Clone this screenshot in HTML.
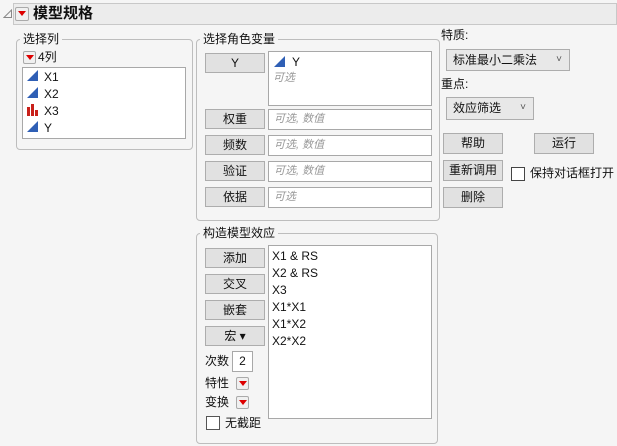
<!DOCTYPE html>
<html><head><meta charset="utf-8"><style>
*{box-sizing:border-box;margin:0;padding:0}
body{width:617px;height:446px;background:#f5f5f5;font-family:"Liberation Sans","Noto Sans CJK SC",sans-serif;font-size:12px;color:#111;position:relative;overflow:hidden}
.a{position:absolute}
.grp{position:absolute;border:1px solid #bdbdbd;border-radius:4px}
.leg{position:absolute;background:#f5f5f5;padding:0 3px;font-size:12px;line-height:14px}
.btn{position:absolute;background:#e1e1e1;border:1px solid #adadad;text-align:center;font-size:12px;line-height:18px}
.box{position:absolute;background:#fff;border:1px solid #a8a8a8}
.ph{color:#999;font-style:italic;font-size:11px;padding-left:5px;line-height:18px}
.rb{position:absolute;width:13px;height:13px;border:1px solid #aaa;background:#f0f0f0;border-radius:2px}
.rb:after{content:"";position:absolute;left:2px;top:3px;border-left:4px solid transparent;border-right:4px solid transparent;border-top:5px solid #d00}
.cb{position:absolute;width:14px;height:14px;border:1px solid #333;background:#fff}
.dd{position:absolute;background:#e8e8e8;border:1px solid #adadad;font-size:12px;line-height:20px;padding-left:6px}
.dd:after{content:"˅";position:absolute;right:7px;top:0;font-size:10px;color:#555}
.it{position:absolute;font-size:12px;line-height:14px}
</style></head><body>
<svg class="a" style="left:3px;top:9px" width="10" height="10"><polygon points="1,8.5 8.5,1 8.5,8.5" fill="none" stroke="#888" stroke-width="1"/></svg>
<div class="a" style="left:13px;top:3px;width:604px;height:22px;background:#ececec;border:1px solid #c8c8c8"></div>
<div class="rb" style="left:15px;top:7px;width:14px;height:14px"></div>
<div class="a" style="left:33px;top:4px;font-size:15px;font-weight:bold;line-height:20px">模型规格</div>

<div class="grp" style="left:16px;top:39px;width:177px;height:111px"></div>
<div class="leg" style="left:20px;top:32px">选择列</div>
<div class="rb" style="left:23px;top:51px"></div>
<div class="a" style="left:38px;top:50px;line-height:14px">4列</div>
<div class="box" style="left:22px;top:67px;width:164px;height:72px"></div>
<svg class="a" style="left:26px;top:69px" width="16" height="68">
<polygon points="1,12 12,1 12,12" fill="#2f5fb5"/><polygon points="1,29 12,18 12,29" fill="#2f5fb5"/>
<rect x="1" y="38" width="3" height="9" fill="#c8201a"/><rect x="5" y="35" width="3" height="12" fill="#c8201a"/><rect x="9" y="41" width="3" height="6" fill="#c8201a"/>
<polygon points="1,63 12,52 12,63" fill="#2f5fb5"/></svg>
<div class="it" style="left:44px;top:70px">X1</div>
<div class="it" style="left:44px;top:87px">X2</div>
<div class="it" style="left:44px;top:104px">X3</div>
<div class="it" style="left:44px;top:121px">Y</div>

<div class="grp" style="left:196px;top:39px;width:244px;height:182px"></div>
<div class="leg" style="left:200px;top:32px">选择角色变量</div>
<div class="btn" style="left:205px;top:53px;width:60px;height:20px">Y</div>
<div class="box" style="left:268px;top:51px;width:164px;height:55px"></div>
<svg class="a" style="left:273px;top:55px" width="14" height="13"><polygon points="1,12 12,1 12,12" fill="#2f5fb5"/></svg>
<div class="it" style="left:292px;top:55px">Y</div>
<div class="it" style="left:273px;top:71px;color:#999;font-style:italic;font-size:11px">可选</div>
<div class="btn" style="left:205px;top:109px;width:60px;height:20px">权重</div>
<div class="box ph" style="left:268px;top:109px;width:164px;height:21px">可选, 数值</div>
<div class="btn" style="left:205px;top:135px;width:60px;height:20px">频数</div>
<div class="box ph" style="left:268px;top:135px;width:164px;height:21px">可选, 数值</div>
<div class="btn" style="left:205px;top:161px;width:60px;height:20px">验证</div>
<div class="box ph" style="left:268px;top:161px;width:164px;height:21px">可选, 数值</div>
<div class="btn" style="left:205px;top:187px;width:60px;height:20px">依据</div>
<div class="box ph" style="left:268px;top:187px;width:164px;height:21px">可选</div>

<div class="a" style="left:441px;top:28px;line-height:14px">特质:</div>
<div class="dd" style="left:446px;top:49px;width:124px;height:22px">标准最小二乘法</div>
<div class="a" style="left:441px;top:77px;line-height:14px">重点:</div>
<div class="dd" style="left:446px;top:97px;width:88px;height:23px">效应筛选</div>
<div class="btn" style="left:443px;top:133px;width:60px;height:21px">帮助</div>
<div class="btn" style="left:534px;top:133px;width:60px;height:21px">运行</div>
<div class="btn" style="left:443px;top:160px;width:60px;height:21px">重新调用</div>
<div class="cb" style="left:511px;top:167px;border-color:#444"></div>
<div class="a" style="left:530px;top:166px;line-height:14px">保持对话框打开</div>
<div class="btn" style="left:443px;top:187px;width:60px;height:21px">删除</div>

<div class="grp" style="left:196px;top:233px;width:242px;height:211px"></div>
<div class="leg" style="left:200px;top:226px">构造模型效应</div>
<div class="btn" style="left:205px;top:248px;width:60px;height:20px">添加</div>
<div class="btn" style="left:205px;top:274px;width:60px;height:20px">交叉</div>
<div class="btn" style="left:205px;top:300px;width:60px;height:20px">嵌套</div>
<div class="btn" style="left:205px;top:326px;width:60px;height:20px">宏 ▾</div>
<div class="a" style="left:205px;top:354px;line-height:14px">次数</div>
<div class="box" style="left:232px;top:351px;width:21px;height:21px;text-align:center;line-height:19px">2</div>
<div class="a" style="left:205px;top:376px;line-height:14px">特性</div>
<div class="rb" style="left:236px;top:377px"></div>
<div class="a" style="left:205px;top:395px;line-height:14px">变换</div>
<div class="rb" style="left:236px;top:396px"></div>
<div class="cb" style="left:206px;top:416px;border-color:#555"></div>
<div class="a" style="left:225px;top:416px;line-height:14px">无截距</div>
<div class="box" style="left:268px;top:245px;width:164px;height:174px"></div>
<div class="it" style="left:272px;top:249px">X1 &amp; RS</div>
<div class="it" style="left:272px;top:266px">X2 &amp; RS</div>
<div class="it" style="left:272px;top:283px">X3</div>
<div class="it" style="left:272px;top:300px">X1*X1</div>
<div class="it" style="left:272px;top:317px">X1*X2</div>
<div class="it" style="left:272px;top:334px">X2*X2</div>
</body></html>
